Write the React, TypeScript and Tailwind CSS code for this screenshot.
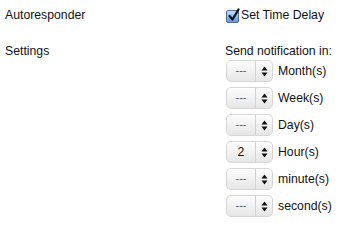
import React from "react";

const rows = [
  { v: "---", label: "Month(s)" },
  { v: "---", label: "Week(s)" },
  { v: "---", label: "Day(s)" },
  { v: "2", label: "Hour(s)" },
  { v: "---", label: "minute(s)" },
  { v: "---", label: "second(s)" },
];

function Select({ v }: { v: string }) {
  const dash = v === "---";
  return (
    <div className="flex h-[22px] w-[47px] items-stretch rounded-[5px] border border-[#d6d6d6] bg-gradient-to-b from-[#fdfdfd] via-[#f2f2f2] to-[#e6e6e6] shadow-[inset_0_1px_0_#ffffff]">
      <div
        className={
          "flex w-[28px] items-center justify-center " +
          (dash ? "text-[11px] text-[#555] pb-[1px]" : "text-[12.25px] text-[#111]")
        }
      >
        {v}
      </div>
      <div className="w-px bg-[#d2d2d2]" />
      <div className="flex flex-1 items-center justify-center">
        <svg width="7" height="11" viewBox="0 0 7 11">
          <path d="M3.5 0.5 L6.5 4.5 L0.5 4.5 Z" fill="#111" />
          <path d="M3.5 10.5 L6.5 6.5 L0.5 6.5 Z" fill="#111" />
        </svg>
      </div>
    </div>
  );
}

export default function App() {
  return (
    <div
      className="w-[362px] h-[229px] bg-white text-[12.25px] leading-[15px] text-[#111]"
      style={{ fontFamily: "Helvetica, 'Liberation Sans', Arial, sans-serif" }}
    >
      <div className="flex pt-[8px]">
        <div className="w-[225px] pl-[5px]">Autoresponder</div>
        <div className="flex items-center">
          <div className="relative ml-[1px] mt-[1px] h-[13px] w-[13px] rounded-[2px] border border-[#4e6f9c] bg-gradient-to-b from-[#c4def8] via-[#8dbcef] to-[#5d9ae0]">
            <svg
              className="absolute left-[1px] top-[-3px]"
              width="13"
              height="14"
              viewBox="0 0 13 14"
            >
              <path
                d="M1.5 8 L4.5 11.5 L10.5 1.5"
                fill="none"
                stroke="#0d0d0d"
                strokeWidth="2.2"
                strokeLinecap="round"
                strokeLinejoin="round"
              />
            </svg>
          </div>
          <span className="ml-[2px]">Set Time Delay</span>
        </div>
      </div>
      <div className="mt-[21px] flex">
        <div className="w-[225px] pl-[5px]">Settings</div>
        <div className="flex flex-col">
          <div>Send notification in:</div>
          <div className="mt-[1px] flex flex-col gap-[5px] pl-[1px]">
            {rows.map((r) => (
              <div key={r.label} className="flex items-center gap-[5px]">
                <Select v={r.v} />
                <span>{r.label}</span>
              </div>
            ))}
          </div>
        </div>
      </div>
    </div>
  );
}
